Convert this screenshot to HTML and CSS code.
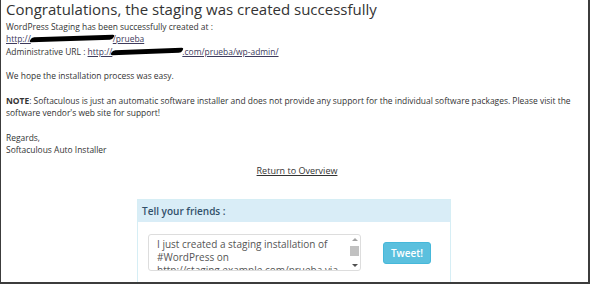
FILE: index.html
```html
<!DOCTYPE html>
<html lang="en">
<head>
    <meta charset="UTF-8">
    <title>Staging created</title>
    <link rel="stylesheet" href="styles.css">
</head>
<body>
    <div id="wrap">
        <h2 class="title">Congratulations, the staging was created successfully</h2>
        <div class="msg">
            <p>WordPress Staging has been successfully created at :<br>
            <a href="#">http://<span class="blot blot1"></span>/prueba</a><br>
            Administrative URL : <a href="#">http://<span class="blot blot2"></span>.com/prueba/wp-admin/</a></p>
            <p>We hope the installation process was easy.</p>
            <p><b>NOTE</b>: Softaculous is just an automatic software installer and does not provide any support for the individual software packages. Please visit the software vendor's web site for support!</p>
            <p>Regards,<br>Softaculous Auto Installer</p>
        </div>
        <div class="back"><a href="#">Return to Overview</a></div>
        <div class="panel">
            <div class="panel-head">Tell your friends :</div>
            <div class="panel-body">
                <div class="tweet-box">
                    <div class="tweet-text">I just created a staging installation of #WordPress on http://staging.example.com/prueba via @Softaculous</div>
                    <div class="scroll">
                        <span class="arrow up"></span>
                        <span class="thumb"></span>
                        <span class="arrow down"></span>
                    </div>
                </div>
                <button class="btn-tweet">Tweet!</button>
            </div>
        </div>
    </div>
</body>
</html>
```

FILE: styles.css
```css
*{margin:0;padding:0;box-sizing:border-box;}
html,body{width:100%;height:100%;background:#fff;}
body{font-family:"Open Sans","Noto Sans",sans-serif;color:#333;overflow:hidden;}
#wrap{
    width:590px;
    height:284px;
    border-left:1px solid #3c3c3c;
    border-right:2px solid #3c3c3c;
    border-bottom:2px solid #3c3c3c;
    padding:0 0 0 5px;
    overflow:hidden;
}
.title{font-size:15px;font-weight:normal;line-height:19px;color:#333;}
.msg{font-size:8.45px;line-height:12.3px;margin-top:2px;}
.msg p{margin-bottom:12.3px;}
.msg p:last-child{margin-bottom:0;}
.msg a{color:#3d3a5c;text-decoration:underline;}
.blot{
    display:inline-block;
    height:5px;
    background:#000;
    border-radius:3px;
    transform:skewX(-30deg) rotate(-2deg);
    vertical-align:1px;
}
.blot1{width:82px;}
.blot2{width:70px;}
.back{text-align:center;font-size:9px;margin-top:8px;}
.back a{color:#333;}
.panel{
    width:314px;
    margin:22px 0 0 131px;
    border:1px solid #d6eef5;
    border-bottom:none;
    height:90px;
}
.panel-head{
    background:#d9edf7;
    color:#31506a;
    font-size:10px;
    font-weight:600;
    height:22px;
    line-height:22px;
    padding-left:4px;
}
.panel-body{display:flex;align-items:center;padding:12px 0 0 10px;}
.tweet-box{
    display:flex;
    width:213px;
    height:37px;
    border:1px solid #ddd;
    border-radius:3px;
    overflow:hidden;
}
.tweet-text{
    flex:1;
    font-size:10px;
    line-height:13px;
    color:#555;
    padding:3px 6px 0 8px;
    overflow:hidden;
}
.scroll{
    width:11px;
    display:flex;
    flex-direction:column;
    align-items:center;
    padding:3px 0;
}
.arrow{width:0;height:0;border-left:3px solid transparent;border-right:3px solid transparent;}
.arrow.up{border-bottom:3px solid #a3a3a3;}
.arrow.down{border-top:3px solid #505050;margin-top:auto;}
.thumb{width:9px;height:10px;background:#c1c1c1;margin-top:5px;}
.btn-tweet{
    margin-left:22px;
    width:48px;
    height:22px;
    background:#5bc0de;
    border:1px solid #46b8da;
    border-radius:3px;
    color:#fff;
    font-family:"Open Sans","Noto Sans",sans-serif;
    font-size:10px;
    font-weight:600;
}
```
